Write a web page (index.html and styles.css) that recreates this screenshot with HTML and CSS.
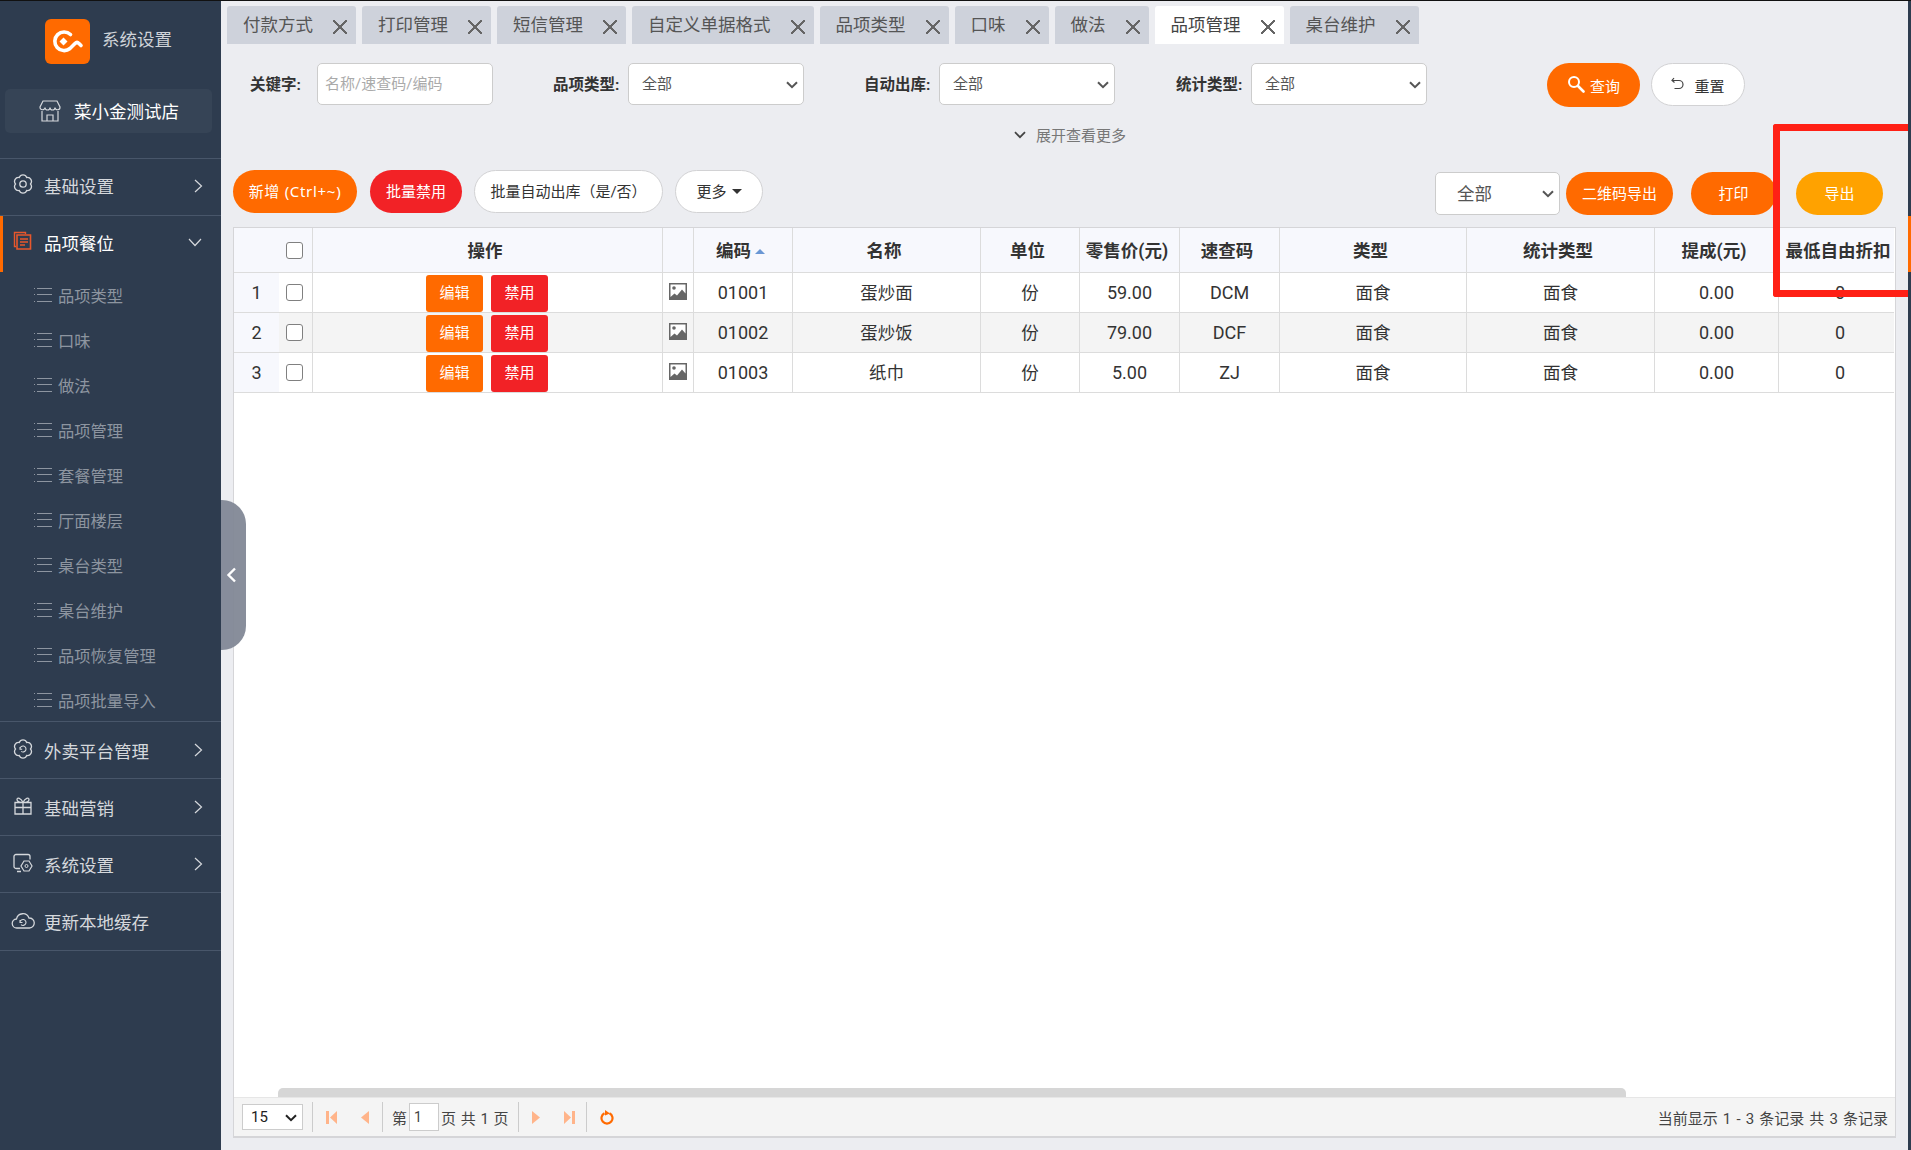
FILE: index.html
```html
<!DOCTYPE html>
<html lang="zh-CN">
<head>
<meta charset="utf-8">
<title>品项管理</title>
<link rel="stylesheet" href="styles.css">
</head>
<body>
<div class="app">
  <aside class="sidebar">
    <div class="brand">
      <span class="logo">
        <svg viewBox="0 0 45 45" width="45" height="45"><path d="M25.500 15.500A9.300 9.300 0 1 0 25 29.500L30 24.500Q32 22.500 34 24.500L36 26.500" fill="none" stroke="#fff" stroke-width="3.600" stroke-linecap="round"/><path d="M18.500 18.500L22.500 22.500L18.500 26.500L14.500 22.500Z" fill="#fff"/></svg>
      </span>
      <span class="brand-name">系统设置</span>
    </div>
    <div class="store">
      <svg class="store-icon" viewBox="0 0 22 22" width="22" height="22"><path d="M4 1h14l3 6a2.500 2.500 0 0 1-5 .5a2.500 2.500 0 0 1-5 0a2.500 2.500 0 0 1-5 0a2.500 2.500 0 0 1-5-.5zM3 11v10h16V11M8 21v-6h6v6" fill="none" stroke="#d5d8dc" stroke-width="1.200"/></svg>
      <span>菜小金测试店</span>
    </div>
    <nav class="menu">
      <div class="menu-item upper">
        <svg class="menu-icon" viewBox="0 0 20 20" width="20" height="20"><path d="M17.500 10A4 4 0 0 1 13.750 16.500A4 4 0 0 1 6.250 16.500A4 4 0 0 1 2.500 10A4 4 0 0 1 6.250 3.500A4 4 0 0 1 13.750 3.500A4 4 0 0 1 17.500 10Z" fill="none" stroke="#d5d8dc" stroke-width="1.300"/><circle cx="10" cy="10" r="3.200" fill="none" stroke="#d5d8dc" stroke-width="1.300"/></svg>
        <span class="menu-text">基础设置</span>
        <svg class="chev" viewBox="0 0 9 14" width="9" height="14"><path d="M1 1l6.500 6L1 13" fill="none" stroke="#d5d8dc" stroke-width="1.200"/></svg>
      </div>
      <div class="menu-item upper active">
        <svg class="menu-icon" viewBox="0 0 20 20" width="20" height="20"><path d="M3 15.500H1.500V1.500h11V3" fill="none" stroke="#e8572c" stroke-width="1.400"/><path d="M4 4h13.500v14H4z" fill="none" stroke="#e8572c" stroke-width="1.600"/><path d="M7 8h8M7 11h8M7 14h5" stroke="#e8572c" stroke-width="1.400"/></svg>
        <span class="menu-text">品项餐位</span>
        <svg class="chev-down" viewBox="0 0 14 9" width="14" height="9"><path d="M1 1l6 6.500L13 1" fill="none" stroke="#d5d8dc" stroke-width="1.200"/></svg>
      </div>
      <ul class="submenu">
        <li><span class="sub-icon"></span>品项类型</li>
        <li><span class="sub-icon"></span>口味</li>
        <li><span class="sub-icon"></span>做法</li>
        <li><span class="sub-icon"></span>品项管理</li>
        <li><span class="sub-icon"></span>套餐管理</li>
        <li><span class="sub-icon"></span>厅面楼层</li>
        <li><span class="sub-icon"></span>桌台类型</li>
        <li><span class="sub-icon"></span>桌台维护</li>
        <li><span class="sub-icon"></span>品项恢复管理</li>
        <li><span class="sub-icon"></span>品项批量导入</li>
      </ul>
      <div class="menu-item">
        <svg class="menu-icon" viewBox="0 0 20 20" width="20" height="20"><path d="M17.500 10A4 4 0 0 1 13.750 16.500A4 4 0 0 1 6.250 16.500A4 4 0 0 1 2.500 10A4 4 0 0 1 6.250 3.500A4 4 0 0 1 13.750 3.500A4 4 0 0 1 17.500 10Z" fill="none" stroke="#d5d8dc" stroke-width="1.300"/><path d="M7 10a3 3 0 1 1 1.200 2.400M7 8v2.200h2.200" fill="none" stroke="#d5d8dc" stroke-width="1.100"/></svg>
        <span class="menu-text">外卖平台管理</span>
        <svg class="chev" viewBox="0 0 9 14" width="9" height="14"><path d="M1 1l6.500 6L1 13" fill="none" stroke="#d5d8dc" stroke-width="1.200"/></svg>
      </div>
      <div class="menu-item">
        <svg class="menu-icon" viewBox="0 0 20 20" width="20" height="20"><path d="M2 6.500h16v11.500H2zM2 11.500h16M10 6.500v11.500M10 6.500C8 2 4 1 4 3.500c0 2 3 3 6 3c3 0 6-1 6-3c0-2.500-4-1.500-6 3z" fill="none" stroke="#d5d8dc" stroke-width="1.300"/></svg>
        <span class="menu-text">基础营销</span>
        <svg class="chev" viewBox="0 0 9 14" width="9" height="14"><path d="M1 1l6.500 6L1 13" fill="none" stroke="#d5d8dc" stroke-width="1.200"/></svg>
      </div>
      <div class="menu-item">
        <svg class="menu-icon" viewBox="0 0 20 20" width="20" height="20"><path d="M7 15.500H3a2 2 0 0 1-2-2V3.500a2 2 0 0 1 2-2h12a2 2 0 0 1 2 2v3M4 18.500h4" fill="none" stroke="#d5d8dc" stroke-width="1.300"/><path d="M11 8h5l3 5l-3 5h-5l-3-5z" fill="none" stroke="#d5d8dc" stroke-width="1.200"/><circle cx="13.500" cy="13" r="1.500" fill="none" stroke="#d5d8dc"/></svg>
        <span class="menu-text">系统设置</span>
        <svg class="chev" viewBox="0 0 9 14" width="9" height="14"><path d="M1 1l6.500 6L1 13" fill="none" stroke="#d5d8dc" stroke-width="1.200"/></svg>
      </div>
      <div class="menu-item">
        <svg class="menu-icon cloud" viewBox="0 0 24 18" width="24" height="18"><path d="M6 16a4.500 4.500 0 0 1-.5-9A6.500 6.500 0 0 1 18 6a5 5 0 0 1 .5 10z" fill="none" stroke="#d5d8dc" stroke-width="1.300"/><path d="M9 10.500a3 3 0 1 1 1 2.200M9 8v2.500h2.500" fill="none" stroke="#d5d8dc" stroke-width="1.100"/></svg>
        <span class="menu-text">更新本地缓存</span>
      </div>
    </nav>
  </aside>

  <main class="main">
    <div class="tabs">
      <div class="tab">付款方式<span class="tab-x"></span></div>
      <div class="tab">打印管理<span class="tab-x"></span></div>
      <div class="tab">短信管理<span class="tab-x"></span></div>
      <div class="tab">自定义单据格式<span class="tab-x"></span></div>
      <div class="tab">品项类型<span class="tab-x"></span></div>
      <div class="tab">口味<span class="tab-x"></span></div>
      <div class="tab">做法<span class="tab-x"></span></div>
      <div class="tab current">品项管理<span class="tab-x"></span></div>
      <div class="tab">桌台维护<span class="tab-x"></span></div>
    </div>

    <form class="filters">
      <div class="field first">
        <label class="field-label short">关键字:</label>
        <div class="text-input">名称/速查码/编码</div>
      </div>
      <div class="field">
        <label class="field-label">品项类型:</label>
        <div class="select">全部<svg class="sel-chev" viewBox="0 0 12 8" width="12" height="8"><path d="M1 1.200l5 5l5-5" fill="none" stroke="#555" stroke-width="2"/></svg></div>
      </div>
      <div class="field">
        <label class="field-label">自动出库:</label>
        <div class="select">全部<svg class="sel-chev" viewBox="0 0 12 8" width="12" height="8"><path d="M1 1.200l5 5l5-5" fill="none" stroke="#555" stroke-width="2"/></svg></div>
      </div>
      <div class="field last">
        <label class="field-label">统计类型:</label>
        <div class="select">全部<svg class="sel-chev" viewBox="0 0 12 8" width="12" height="8"><path d="M1 1.200l5 5l5-5" fill="none" stroke="#555" stroke-width="2"/></svg></div>
      </div>
      <button type="button" class="pill orange query">
        <svg viewBox="0 0 18 18" width="18" height="18"><circle cx="7" cy="7" r="5" fill="none" stroke="#fff" stroke-width="2"/><path d="M11 11l5.500 5.500" stroke="#fff" stroke-width="2.600" stroke-linecap="round"/></svg>
        <span class="shift">查询</span>
      </button>
      <button type="button" class="pill white reset">
        <svg viewBox="0 0 14 14" width="14" height="14"><path d="M3 1L1 3.500l2.500 2M1.500 3.500h6.500a4 4 0 0 1 0 8H3.500" fill="none" stroke="#444" stroke-width="1.200"/></svg>
        <span class="shift">重置</span>
      </button>
    </form>

    <div class="expand">
      <svg viewBox="0 0 12 8" width="12" height="8"><path d="M1 1.200l5 5l5-5" fill="none" stroke="#444" stroke-width="1.800"/></svg>
      <span>展开查看更多</span>
    </div>

    <div class="toolbar">
      <div class="tool-left">
        <button type="button" class="pill orange add">新增 (Ctrl+~)</button>
        <button type="button" class="pill red disable">批量禁用</button>
        <button type="button" class="pill white batch">批量自动出库（是/否）</button>
        <button type="button" class="pill white more">更多<i class="caret"></i></button>
      </div>
      <div class="tool-right">
        <div class="select big">全部<svg class="sel-chev" viewBox="0 0 12 8" width="12" height="8"><path d="M1 1.200l5 5l5-5" fill="none" stroke="#555" stroke-width="2"/></svg></div>
        <button type="button" class="pill orange qr">二维码导出</button>
        <button type="button" class="pill orange print">打印</button>
        <button type="button" class="pill amber export">导出</button>
      </div>
    </div>

    <section class="grid">
      <table class="table">
        <colgroup>
          <col class="c-num"><col class="c-chk"><col class="c-op"><col class="c-img"><col class="c-code"><col class="c-name"><col class="c-unit"><col class="c-price"><col class="c-quick"><col class="c-type"><col class="c-stat"><col class="c-comm"><col class="c-min">
        </colgroup>
        <thead>
          <tr>
            <th class="num"></th><th class="ck"><input type="checkbox" class="check"></th><th class="lean">操作</th><th></th>
            <th class="lean">编码<i class="sort"></i></th><th class="lean">名称</th><th class="lean">单位</th><th class="lean">零售价(元)</th><th class="lean">速查码</th><th class="lean">类型</th><th class="lean">统计类型</th><th class="lean">提成(元)</th><th class="end">最低自由折扣</th>
          </tr>
        </thead>
        <tbody>
          <tr>
            <td class="num">1</td><td class="ck"><input type="checkbox" class="check"></td>
            <td><div class="ops"><span class="op orange">编辑</span><span class="op red">禁用</span></div></td>
            <td><svg class="pic" viewBox="0 0 18 17" width="18" height="17"><path d="M0 0h18v17H0z" fill="#666"/><path d="M1.500 1.500h15v9l-3.500-4-5 6-2.500-2-4 3.500z" fill="#fff"/><circle cx="5" cy="5" r="1.800" fill="#666"/></svg></td>
            <td>01001</td><td class="zh">蛋炒面</td><td class="zh">份</td><td>59.00</td><td>DCM</td><td class="zh">面食</td><td class="zh">面食</td><td>0.00</td><td class="end">0</td>
          </tr>
          <tr class="alt">
            <td class="num">2</td><td class="ck"><input type="checkbox" class="check"></td>
            <td><div class="ops"><span class="op orange">编辑</span><span class="op red">禁用</span></div></td>
            <td><svg class="pic" viewBox="0 0 18 17" width="18" height="17"><path d="M0 0h18v17H0z" fill="#666"/><path d="M1.500 1.500h15v9l-3.500-4-5 6-2.500-2-4 3.500z" fill="#fff"/><circle cx="5" cy="5" r="1.800" fill="#666"/></svg></td>
            <td>01002</td><td class="zh">蛋炒饭</td><td class="zh">份</td><td>79.00</td><td>DCF</td><td class="zh">面食</td><td class="zh">面食</td><td>0.00</td><td class="end">0</td>
          </tr>
          <tr>
            <td class="num">3</td><td class="ck"><input type="checkbox" class="check"></td>
            <td><div class="ops"><span class="op orange">编辑</span><span class="op red">禁用</span></div></td>
            <td><svg class="pic" viewBox="0 0 18 17" width="18" height="17"><path d="M0 0h18v17H0z" fill="#666"/><path d="M1.500 1.500h15v9l-3.500-4-5 6-2.500-2-4 3.500z" fill="#fff"/><circle cx="5" cy="5" r="1.800" fill="#666"/></svg></td>
            <td>01003</td><td class="zh">纸巾</td><td class="zh">份</td><td>5.00</td><td>ZJ</td><td class="zh">面食</td><td class="zh">面食</td><td>0.00</td><td class="end">0</td>
          </tr>
        </tbody>
      </table>
      <div class="grid-space"><div class="scroll-thumb"></div></div>
      <footer class="pager">
        <div class="page-size">15<svg viewBox="0 0 12 8" width="12" height="8"><path d="M1 1.200l5 5l5-5" fill="none" stroke="#222" stroke-width="2"/></svg></div>
        <span class="sep"></span>
        <svg class="pg first-pg" viewBox="0 0 11 13" width="11" height="13"><path d="M0 0h3v13H0zM11 0v13L4 6.500z" fill="#ffb48a"/></svg>
        <svg class="pg prev-pg" viewBox="0 0 8 13" width="8" height="13"><path d="M8 0v13L0 6.500z" fill="#ffb48a"/></svg>
        <span class="sep"></span>
        <span class="pg-text">第</span><span class="pg-input">1</span><span class="pg-text">页 共 1 页</span>
        <span class="sep"></span>
        <svg class="pg next-pg" viewBox="0 0 8 13" width="8" height="13"><path d="M0 0v13L8 6.500z" fill="#ffb48a"/></svg>
        <svg class="pg last-pg" viewBox="0 0 11 13" width="11" height="13"><path d="M8 0h3v13H8zM0 0v13L7 6.500z" fill="#ffb48a"/></svg>
        <span class="sep"></span>
        <svg class="pg refresh" viewBox="0 0 14 15" width="14" height="15"><path d="M9.500 3.200a5.500 5.500 0 1 1-5 0" fill="none" stroke="#ff6a00" stroke-width="2.200"/><path d="M5 0l5 3.500L5 5.500z" fill="#ff6a00"/></svg>
        <span class="pager-info">当前显示 1 - 3 条记录 共 3 条记录</span>
      </footer>
    </section>

    <div class="handle"><svg viewBox="0 0 11 16" width="11" height="16"><path d="M9 1.500L2.500 8L9 14.500" fill="none" stroke="#fff" stroke-width="2.400"/></svg></div>
    <div class="red-mark"></div>
  </main>

  <div class="edge"><div class="edge-accent"></div></div>
</div>
</body>
</html>
```
FILE: styles.css
```css
* { box-sizing: border-box; }
html, body { margin: 0; padding: 0; }
body {
  font-family: "Roboto", "Noto Sans CJK SC", sans-serif;
  color: #333;
  background: #ecedf1;
  overflow: hidden;
}
button { font-family: inherit; }

.app {
  display: flex;
  width: 1911px;
  height: 1150px;
  border-top: 1px solid #111;
}

/* sidebar */
.sidebar {
  width: 221px;
  flex: none;
  background: #2e3c4f;
  color: #d5d8dc;
}
.brand {
  display: flex;
  align-items: center;
  padding: 18px 0 0 45px;
  height: 63px;
}
.logo {
  width: 45px;
  height: 45px;
  background: #ff6a00;
  border-radius: 6px;
  flex: none;
  display: block;
}
.logo svg { display: block; }
.brand-name {
  margin-left: 12px;
  font-size: 17.500px;
  line-height: 24px;
  position: relative;
  top: -2px;
  color: #cfd3d8;
}
.store {
  margin: 25px 9px 0 5px;
  height: 44px;
  background: #364456;
  border-radius: 5px;
  display: flex;
  align-items: center;
  padding: 0 0 2px 34px;
  font-size: 17.500px;
  color: #fff;
}
.store-icon { margin-right: 13px; position: relative; top: 1px; }
.menu { margin-top: 25px; border-top: 1px solid #48566a; }
.menu-item {
  height: 57px;
  display: flex;
  align-items: center;
  border-bottom: 1px solid #48566a;
  position: relative;
  padding: 0 0 0 13px;
  font-size: 17.500px;
  color: #d5d8dc;
}
.menu-item.upper { padding-bottom: 4px; }
.menu-item:last-child { height: 58px; }
.menu-icon { flex: none; position: relative; top: -1px; }
.menu-icon.cloud { margin-left: -2px; margin-right: -2px; }
.menu-text { margin-left: 11px; }
.chev { position: absolute; left: 194px; top: 21px; }
.upper .chev { top: 20px; }
.chev-down { position: absolute; left: 188px; top: 22px; }
.menu-item.active {
  color: #fff;
  border-bottom: 0;
  height: 56px;
  box-shadow: inset 3px 0 0 #ff6a00;
}
.submenu { list-style: none; margin: 0; padding: 0; border-bottom: 1px solid #48566a; }
.submenu li {
  height: 45px;
  display: flex;
  align-items: center;
  padding-left: 34px;
  font-size: 16.300px;
  color: #8d95a0;
}
.submenu li:last-child { height: 44px; padding-top: 1px; }
.sub-icon {
  width: 18px;
  height: 14px;
  margin-right: 6px;
  flex: none;
  background:
    linear-gradient(#8d95a0, #8d95a0) 3px 0 / 15px 1px no-repeat,
    linear-gradient(#8d95a0, #8d95a0) 3px 6px / 15px 1px no-repeat,
    linear-gradient(#8d95a0, #8d95a0) 3px 13px / 15px 1px no-repeat,
    linear-gradient(#8d95a0, #8d95a0) 0 0 / 1px 1px no-repeat,
    linear-gradient(#8d95a0, #8d95a0) 0 6px / 1px 1px no-repeat,
    linear-gradient(#8d95a0, #8d95a0) 0 13px / 1px 1px no-repeat;
}

/* main */
.main {
  flex: 1;
  min-width: 0;
  position: relative;
  display: flex;
  flex-direction: column;
  padding-bottom: 12px;
}
.tabs {
  display: flex;
  gap: 6px;
  margin: 5px 0 0 6px;
  height: 38px;
}
.tab {
  background: #ced2db;
  color: #555;
  font-size: 17.500px;
  line-height: 38px;
  padding: 0 9px 0 16px;
  display: flex;
  align-items: flex-start;
  border-radius: 3px 3px 0 0;
  white-space: nowrap;
}
.tab.current { background: #fff; color: #444; }
.tab-x {
  width: 14px;
  height: 14px;
  margin: 14px 0 0 20px;
  background:
    linear-gradient(45deg, transparent 43%, #666 43%, #666 57%, transparent 57%),
    linear-gradient(-45deg, transparent 43%, #666 43%, #666 57%, transparent 57%);
}

.filters {
  display: flex;
  align-items: flex-start;
  margin-top: 19px;
  height: 44px;
}
.field { display: flex; align-items: center; gap: 8px; margin-left: 60px; height: 42px; }
.field.first { margin-left: 29px; gap: 15px; }
.field.last { margin-left: 61px; }
.field-label {
  font-size: 15.500px;
  font-weight: 700;
  color: #333;
  width: 67px;
  white-space: nowrap;
  padding-bottom: 2px;
}
.field-label.short { width: 52px; }
.text-input {
  width: 176px;
  height: 42px;
  background: #fff;
  border: 1px solid #ccc;
  border-radius: 5px;
  padding-left: 7px;
  font-size: 15px;
  line-height: 40px;
  color: #aaa;
}
.select {
  width: 176px;
  height: 42px;
  background: #fff;
  border: 1px solid #ccc;
  border-radius: 5px;
  padding-left: 13px;
  font-size: 15px;
  line-height: 40px;
  color: #555;
  position: relative;
}
.sel-chev { position: absolute; right: 5px; top: 17px; }
.select.big {
  width: 125px;
  height: 43px;
  font-size: 17.500px;
  line-height: 43px;
  padding-left: 21px;
  margin-right: 6px;
}

.pill {
  height: 43px;
  border: 0;
  border-radius: 22px;
  font-size: 15px;
  padding: 0 0 2px;
  display: inline-flex;
  align-items: center;
  justify-content: center;
  flex: none;
}
.pill.orange { background: #ff6a00; color: #fff; }
.pill.red { background: #f22226; color: #fff; }
.pill.amber { background: #ffa200; color: #fff; }
.pill.white { background: #fff; color: #333; border: 1px solid #d2d2d4; }
.query { width: 93px; height: 44px; margin-left: 120px; gap: 5px; }
.reset { width: 94px; margin-left: 11px; gap: 9px; }
.shift { position: relative; top: 2px; }
.query .shift { top: 1px; }
.expand {
  display: flex;
  justify-content: center;
  align-items: center;
  gap: 10px;
  margin-top: 16px;
  height: 22px;
  padding-left: 11px;
  font-size: 15px;
  color: #777;
}
.expand svg { margin-top: 2px; }
.toolbar {
  display: flex;
  justify-content: space-between;
  margin-top: 25px;
  height: 45px;
  padding: 0 25px 0 12px;
}
.tool-left { display: flex; }
.tool-right { display: flex; align-items: flex-end; }
.add {
  width: 124px;
  font-family: "Noto Sans", "Noto Sans CJK SC", sans-serif;
  letter-spacing: .7px;
}
.disable { width: 92px; margin-left: 13px; }
.batch { width: 189px; margin-left: 12px; color: #444; }
.more { width: 88px; margin-left: 12px; color: #444; }
.caret {
  display: inline-block;
  margin: 2px 0 0 5px;
  border: 5px solid transparent;
  border-top-color: #333;
  border-bottom: 0;
}
.qr { width: 107px; }
.print { width: 85px; margin-left: 18px; }
.export { width: 87px; margin-left: 20px; }

/* grid */
.grid {
  flex: 1;
  margin: 12px 12px 0 12px;
  background: #fff;
  border: 1px solid #d5d5d8;
  border-bottom: 2px solid #d5d5d8;
  display: flex;
  flex-direction: column;
  min-height: 0;
}
.table {
  border-collapse: separate;
  border-spacing: 0;
  table-layout: fixed;
  width: 1660px;
  flex: none;
  font-size: 18px;
  color: #333;
}
.c-num { width: 45px; }
.c-chk { width: 34px; }
.c-op { width: 350px; }
.c-img { width: 31px; }
.c-code { width: 99px; }
.c-name { width: 188px; }
.c-unit { width: 99px; }
.c-price { width: 100px; }
.c-quick { width: 100px; }
.c-type { width: 187px; }
.c-stat { width: 188px; }
.c-comm { width: 124px; }
.c-min { width: 115px; }
th, td {
  padding: 0;
  text-align: center;
  border-right: 1px solid #dcdcdc;
  border-bottom: 1px solid #dcdcdc;
  white-space: nowrap;
  overflow: hidden;
}
th {
  height: 45px;
  background: #f7f8fd;
  font-weight: 700;
  font-size: 17.500px;
  color: #333;
  padding-bottom: 2px;
}
th.lean { padding-right: 5px; }
th.end { padding-left: 3px; }
th.ck, td.ck { padding: 0 2px 0 0; }
td { height: 40px; }
td.zh { padding-bottom: 2px; font-size: 17.500px; }
td.end { padding-left: 7px; }
tr.alt td { background: #f4f4f4; }
th.num, td.num { border-right: 0; background: #f7f8fd; }
tr.alt td.num { background: #f7f8fd; }
th:last-child, td:last-child { border-right: 0; }
.check {
  appearance: none;
  -webkit-appearance: none;
  display: block;
  margin: 0 auto;
  width: 17px;
  height: 17px;
  background: #fff;
  border: 1.500px solid #808080;
  border-radius: 3px;
}
.sort {
  display: inline-block;
  margin-left: 4px;
  vertical-align: 3px;
  border: 5px solid transparent;
  border-bottom: 5px solid #6a97d4;
  border-top: 0;
}
.ops { display: flex; justify-content: center; gap: 8px; margin-left: -1px; padding-top: 1px; }
.op {
  width: 57px;
  height: 37px;
  border-radius: 3px;
  font-size: 15px;
  line-height: 37px;
  color: #fff;
}
.op.orange { background: #ff6a00; }
.op.red { background: #f22226; }
.pic { display: block; margin: -2px auto 0; }
.grid-space {
  flex: 1;
  position: relative;
  min-height: 0;
}
.scroll-thumb {
  position: absolute;
  left: 44px;
  width: 1348px;
  bottom: 0;
  height: 9px;
  background: #d6d6d6;
  border-radius: 5px 5px 0 0;
}
.pager {
  flex: none;
  height: 39px;
  background: #f4f4f4;
  display: flex;
  align-items: center;
  padding: 0 7px 0 8px;
  font-size: 15px;
  word-spacing: 1px;
  color: #444;
  border-top: 1px solid #e6e6e6;
}
.page-size {
  width: 61px;
  height: 26px;
  background: #fff;
  border: 1px solid #ccc;
  padding-left: 8px;
  font-size: 15px;
  line-height: 24px;
  color: #222;
  position: relative;
}
.page-size svg { position: absolute; right: 5px; top: 9px; }
.sep { width: 1px; height: 30px; background: #ccc; flex: none; margin-left: 9px; }
.pg { flex: none; }
.first-pg { margin-left: 13px; }
.prev-pg { margin-left: 24px; }
.prev-pg + .sep { margin-left: 13px; }
.sep + .pg-text { margin-left: 9px; }
.pg-input {
  width: 30px;
  height: 28px;
  background: #fff;
  border: 1px solid #ccc;
  margin: 0 2px;
  padding-left: 4px;
  font-size: 14px;
  line-height: 26px;
}
.next-pg { margin-left: 13px; }
.last-pg { margin-left: 24px; }
.last-pg + .sep { margin-left: 11px; }
.refresh { margin-left: 13px; }
.pager-info { margin-left: auto; word-spacing: 1.400px; }

/* overlays */
.handle {
  position: absolute;
  left: 0;
  top: 499px;
  width: 25px;
  height: 150px;
  background: rgba(130, 136, 150, 0.95);
  border-radius: 0 24px 24px 0;
  display: flex;
  align-items: center;
  padding-left: 5px;
}
.red-mark {
  position: absolute;
  left: 1552px;
  top: 123px;
  width: 135px;
  height: 173px;
  border: 7px solid #ff2015;
  border-right: 0;
  border-radius: 3px 0 0 3px;
}
.edge {
  width: 3px;
  flex: none;
  background: #2e3c4f;
  padding-top: 215px;
}
.edge-accent { height: 56px; background: #ff6a00; }
```
